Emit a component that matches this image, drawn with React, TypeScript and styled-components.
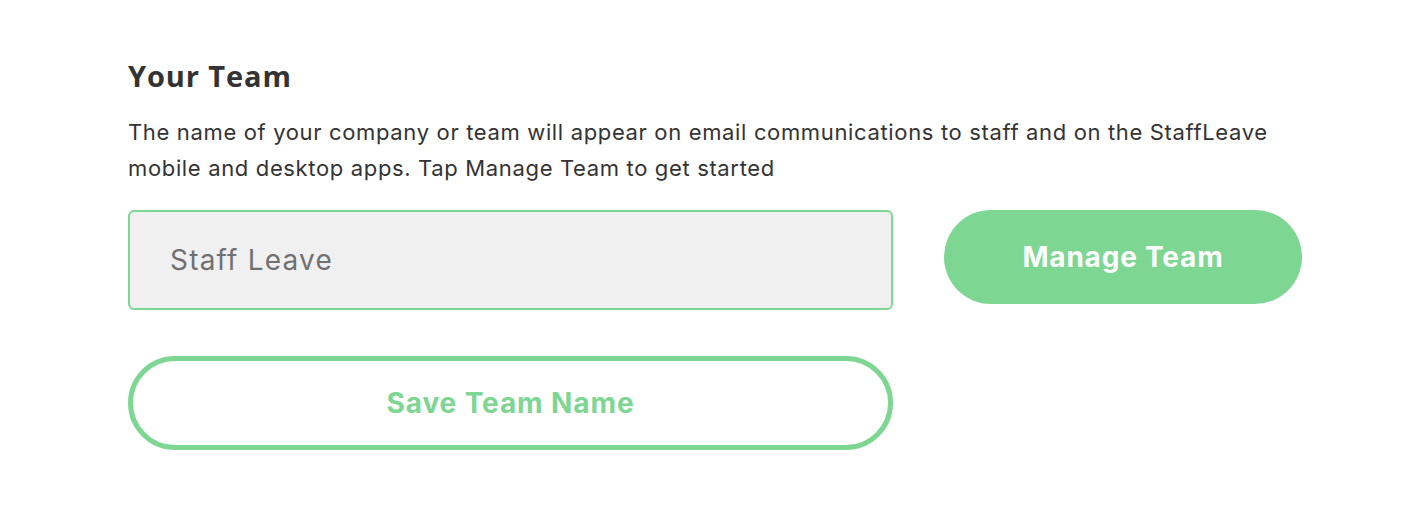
import styled, { createGlobalStyle } from 'styled-components';

const GREEN = '#7ed693';

const GlobalStyle = createGlobalStyle`
  body {
    margin: 0;
    background: #ffffff;
    font-family: Inter, "Noto Sans", sans-serif;
  }
`;

export default function App() {
  return (
    <>
      <GlobalStyle />
      <Section>
        <Title>Your Team</Title>
        <Description>
          The name of your company or team will appear on email communications to staff and on the StaffLeave
          mobile and desktop apps. Tap Manage Team to get started
        </Description>
        <Row>
          <TeamInput defaultValue="Staff Leave" />
          <ManageButton>Manage Team</ManageButton>
        </Row>
        <SaveButton>Save Team Name</SaveButton>
      </Section>
    </>
  );
}

const Section = styled.section`
  padding: 58px 0 0 128px;
  display: flex;
  flex-direction: column;
`;

const Title = styled.h2`
  margin: 0;
  font-family: "Open Sans", Inter, sans-serif;
  font-weight: 700;
  font-size: 29px;
  line-height: 36px;
  letter-spacing: 0.9px;
  color: #333333;
`;

const Description = styled.p`
  margin: 20px 0 0;
  width: 1170px;
  font-family: Inter, sans-serif;
  font-size: 22px;
  line-height: 36px;
  letter-spacing: 0.65px;
  color: #333333;
`;

const Row = styled.div`
  margin-top: 24px;
  display: flex;
  align-items: flex-start;
  gap: 51px;
`;

const TeamInput = styled.input`
  box-sizing: border-box;
  width: 765px;
  height: 100px;
  padding: 0 40px;
  border: 2px solid ${GREEN};
  border-radius: 6px;
  background: #f0f0f0;
  font-family: Inter, sans-serif;
  font-size: 28px;
  letter-spacing: 1.2px;
  color: #707070;
  outline: none;
`;

const ManageButton = styled.button`
  box-sizing: border-box;
  width: 358px;
  height: 94px;
  border: none;
  border-radius: 47px;
  background: ${GREEN};
  color: #ffffff;
  font-family: Inter, sans-serif;
  font-weight: 700;
  font-size: 28px;
  letter-spacing: 0.8px;
  cursor: pointer;
`;

const SaveButton = styled.button`
  box-sizing: border-box;
  margin-top: 46px;
  width: 765px;
  height: 94px;
  border: 5px solid ${GREEN};
  border-radius: 47px;
  background: #ffffff;
  color: ${GREEN};
  font-family: Inter, sans-serif;
  font-weight: 700;
  font-size: 28px;
  letter-spacing: 0.9px;
  cursor: pointer;
`;
